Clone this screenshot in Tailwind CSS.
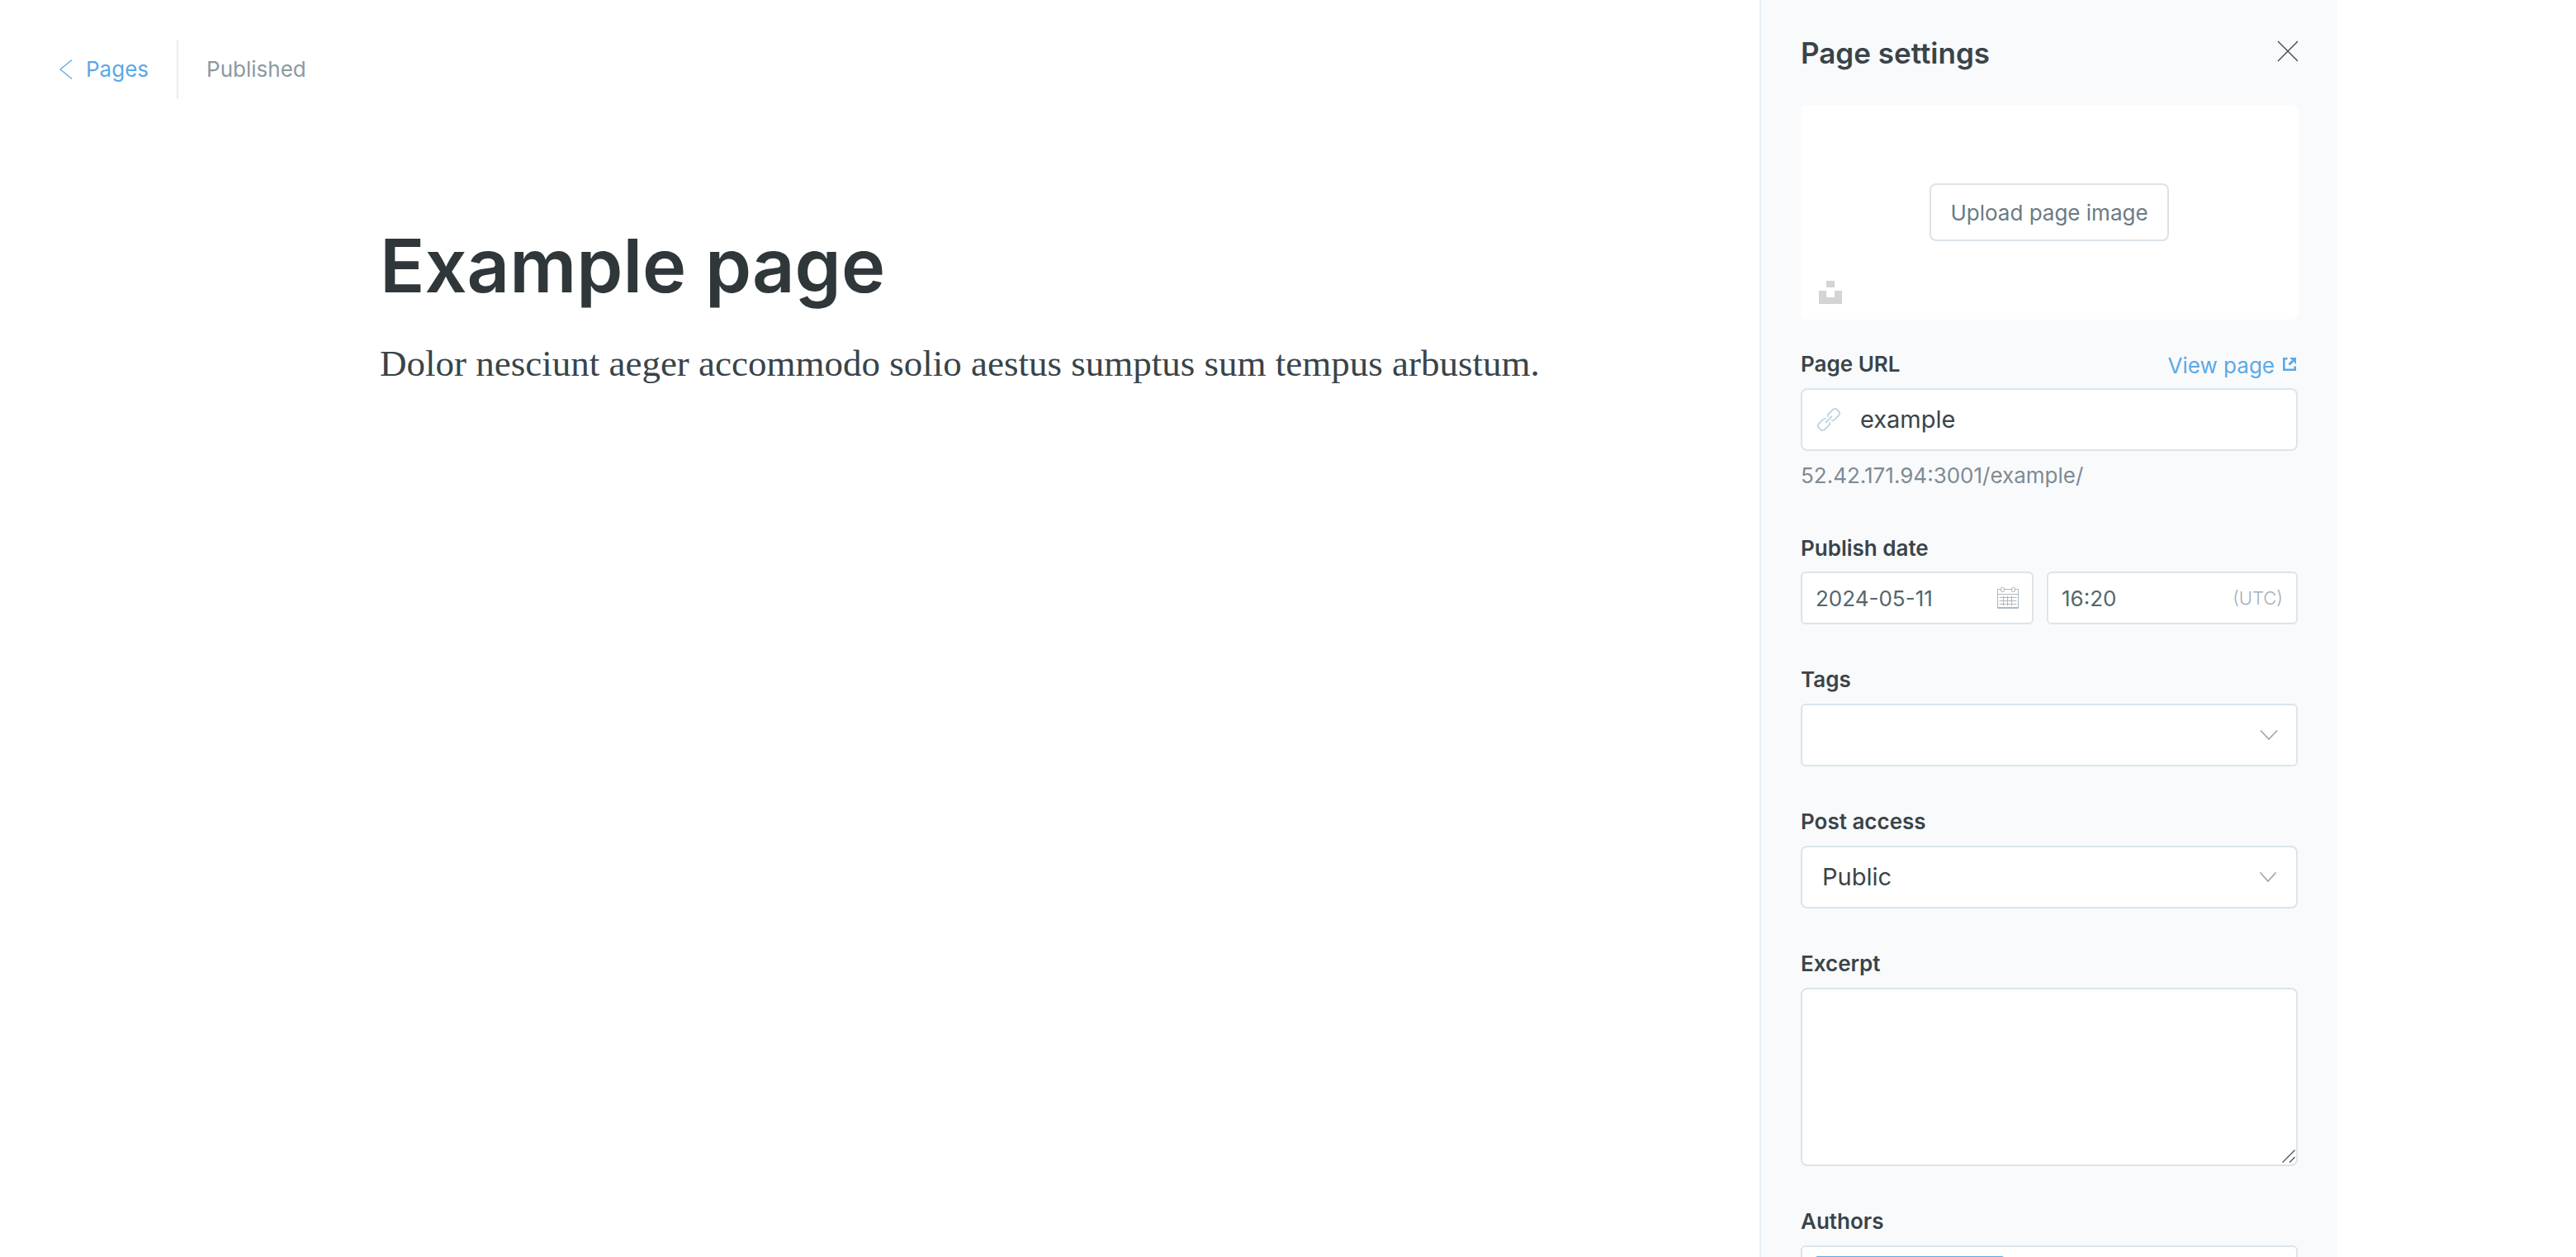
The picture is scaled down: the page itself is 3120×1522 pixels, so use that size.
<!DOCTYPE html>
<html lang="en">
<head>
<meta charset="utf-8">
<title>Example page</title>
<script src="https://cdn.jsdelivr.net/npm/@tailwindcss/browser@4"></script>
</head>
<body class="flex h-screen overflow-hidden bg-white font-[Inter,sans-serif] text-[#394449]">
<div class="min-w-0 flex-1">
  <header class="flex h-[168px] items-center pl-[72px] text-[26px] leading-8">
    <a href="#" class="flex items-center gap-4 pr-[34px] text-[#5ba9e6]">
      <svg class="h-6 w-4" viewBox="0 0 16 24" fill="none" stroke="currentColor" stroke-width="1.3"><path d="M15 0.5L1 12L15 23.5"/></svg>
      Pages
    </a>
    <div class="h-[72px] border-l-2 border-[#e5eff5]"></div>
    <span class="pl-[34px] text-[#8a9aa4]">Published</span>
  </header>
  <main class="pl-[460px]">
    <h1 class="mt-[96px] text-[90px] font-semibold leading-[116px] text-[#30373b]">Example page</h1>
    <p class="mt-[30px] font-['Liberation_Serif',serif] text-[45px] leading-[60px] text-[#394449]">Dolor nesciunt aeger accommodo solio aestus sumptus sum tempus arbustum.</p>
  </main>
</div>
<aside class="mr-[289px] w-[700px] shrink-0 border-l-2 border-[#e5eff5] bg-[#f9fafc] px-12 text-[26px]">
  <div class="flex h-[127px] items-center justify-between">
    <h2 class="text-[35px] font-semibold leading-10">Page settings</h2>
    <button type="button" aria-label="Close" class="pb-[3px]"><svg class="h-[26px] w-[26px]" viewBox="0 0 26 26" stroke="#394449" stroke-width="1.3"><path d="M2 1L26 25M26 1L2 25"/></svg></button>
  </div>
  <div class="relative flex h-[260px] items-center justify-center rounded-lg bg-white">
    <button type="button" class="h-[70px] rounded-lg border-2 border-[#dae3e8] px-[23px] text-[#6b7b84]">Upload page image</button>
    <svg class="absolute bottom-[19px] left-[22px] h-7 w-7" viewBox="0 0 28 28" fill="#d4d4d4"><path d="M9 0h10v8H9zM0 12h9v8h10v-8h9v16H0z"/></svg>
  </div>
  <form>
    <div class="mt-[36px] flex h-[47px] items-start justify-between">
      <label for="url" class="font-semibold leading-9">Page URL</label>
      <a href="#" class="mr-[2px] flex items-center gap-[10px] leading-10 text-[#5ba9e6]">View page
        <svg class="mb-1 h-4 w-4" viewBox="0 0 16 16" fill="none" stroke="currentColor" stroke-width="2.6"><path d="M5.500 1.300H1.300V14.700H14.700V10.500"/><path d="M7.500 8.500L12 4" stroke-width="3"/><path d="M8 0h8v8z" fill="currentColor" stroke="none"/></svg>
      </a>
    </div>
    <div class="flex h-[76px] items-center rounded-lg border-2 border-[#dae5eb] bg-white pl-[18px] pr-5">
      <svg class="h-7 w-7" viewBox="0 0 28 28" fill="none" stroke="#bccfdc" stroke-width="1.7" stroke-linecap="round"><g transform="rotate(-45 14 14)"><path d="M9 14H19"/><path d="M12 10.500Q11.500 9 9 9H2.500Q-1.500 9 -1.500 12V16Q-1.500 19 2.500 19H9Q11.500 19 12 17.500"/><path d="M16 10.500Q16.500 9 19 9H25.500Q29.500 9 29.500 12V16Q29.500 19 25.500 19H19Q16.500 19 16 17.500"/></g></svg>
      <input id="url" value="example" class="ml-6 min-w-0 flex-1 text-[29px] outline-none">
    </div>
    <p class="mt-3 leading-9 text-[#7c8b95]">52.42.171.94:3001/example/</p>

    <label for="date" class="mt-[52px] block font-semibold leading-9">Publish date</label>
    <div class="mt-[10px] flex gap-4">
      <div class="flex h-16 w-[282px] items-center rounded-md border-2 border-[#dae5eb] bg-white px-4 text-[#54666d]">
        <input id="date" value="2024-05-11" class="min-w-0 flex-1 outline-none">
        <svg class="h-[26px] w-[26px]" viewBox="0 0 26 26" fill="none" stroke="#adb9c1" stroke-width="1"><path d="M4.500 2.500H0.500V25.500H25.500V2.500H21.500M8.500 2.500H17.500M0.500 8.500H25.500M2.500 12.500H23.500M2.500 16.500H23.500M2.500 20.500H23.500M7.500 10.500V22.500M12.500 10.500V22.500M17.500 10.500V22.500M0.500 24.500H25.500"/><rect x="4.500" y="0.500" width="4" height="5" rx="1.500"/><rect x="17.500" y="0.500" width="4" height="5" rx="1.500"/></svg>
      </div>
      <div class="flex h-16 min-w-0 flex-1 items-center rounded-md border-2 border-[#dae5eb] bg-white px-4 text-[#54666d]">
        <input aria-label="Publish time" value="16:20" class="min-w-0 flex-1 outline-none">
        <span class="text-[22px] font-light text-[#a3b0b8]">(UTC)</span>
      </div>
    </div>

    <label for="tags" class="mt-[49px] block font-semibold leading-9">Tags</label>
    <div class="mt-[11px] flex h-[76px] items-center rounded-md border-2 border-[#dae5eb] bg-white pl-6 pr-[22px]">
      <input id="tags" role="combobox" aria-expanded="false" class="min-w-0 flex-1 text-[29px] outline-none">
      <svg class="h-3 w-[22px]" viewBox="0 0 22 12" fill="none" stroke="#9baab5" stroke-width="1.8" stroke-linecap="round"><path d="M1.500 1L11 11L20.500 1"/></svg>
    </div>

    <label for="access" class="mt-[49px] block font-semibold leading-9">Post access</label>
    <div class="relative mt-[11px]">
      <select id="access" class="block h-[76px] w-full appearance-none rounded-lg border-2 border-[#dae5eb] bg-white pl-6 text-[29px]"><option>Public</option><option>Members only</option></select>
      <svg class="pointer-events-none absolute right-[25px] top-8 h-3 w-[22px]" viewBox="0 0 22 12" fill="none" stroke="#9baab5" stroke-width="1.8" stroke-linecap="round"><path d="M2 1L11 11L20 1"/></svg>
    </div>

    <label for="excerpt" class="mt-[49px] block font-semibold leading-9">Excerpt</label>
    <div class="relative mt-[11px]">
      <textarea id="excerpt" class="block h-[216px] w-full resize-none rounded-lg border-2 border-[#dae5eb] bg-white p-5 text-[29px] outline-none"></textarea>
      <svg class="pointer-events-none absolute bottom-1 right-[3px] h-4 w-4" viewBox="0 0 16 16" stroke="#555" stroke-width="1.4"><path d="M0.500 15.500L15.500 0.500M9 15.500L15.500 9"/></svg>
    </div>

    <label for="authors" class="mt-[49px] block font-semibold leading-9">Authors</label>
    <div class="mt-[11px] flex h-[76px] items-start gap-3 rounded-md border-2 border-[#dae5eb] bg-white px-[15px] pt-[11px]">
      <span class="h-12 w-[230px] rounded-sm bg-[#5ba9e6]"></span>
      <input id="authors" class="min-w-0 flex-1 text-[29px] outline-none">
    </div>
  </form>
</aside>
</body>
</html>
